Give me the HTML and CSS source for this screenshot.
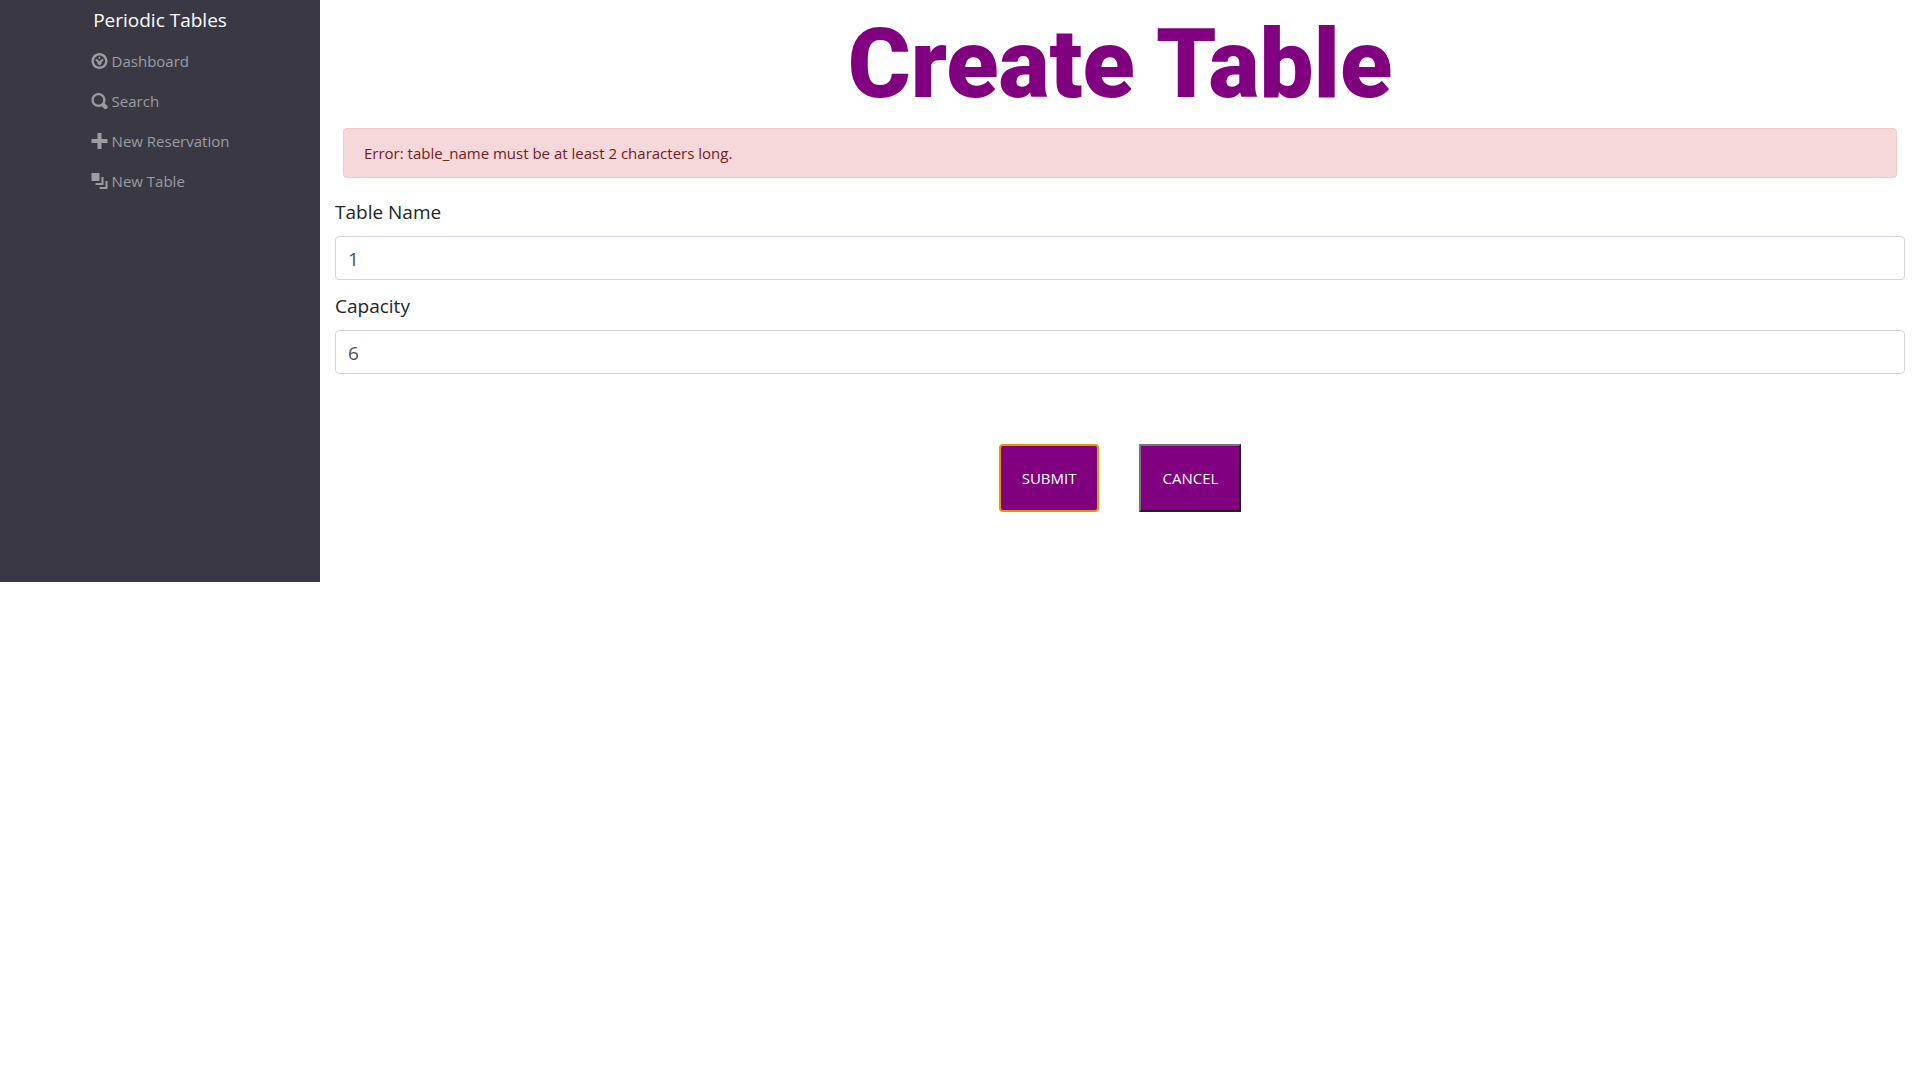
FILE: index.html
```html
<!DOCTYPE html>
<html lang="en">
<head>
<meta charset="utf-8">
<meta name="viewport" content="width=device-width, initial-scale=1">
<title>Periodic Tables</title>
<link rel="stylesheet" href="styles.css">
</head>
<body>
<div class="layout">
  <nav class="sidebar">
    <a class="brand" href="#">Periodic Tables</a>
    <ul class="menu">
      <li><a class="menu-link" href="#"><svg class="icon" viewBox="0 0 8 8" aria-hidden="true"><path fill-rule="evenodd" d="M4 0c-2.2 0-4 1.8-4 4s1.8 4 4 4 4-1.8 4-4-1.8-4-4-4zm0 1.2c1.55 0 2.8 1.25 2.8 2.8s-1.25 2.8-2.8 2.8-2.8-1.25-2.8-2.8 1.25-2.8 2.8-2.8z"/><path d="M4 1.9c-.28 0-.5.22-.5.5s.22.5.5.5.5-.22.5-.5-.22-.5-.5-.5zm-1.66 1.1a.5.5 0 0 0-.19.84l.91.91c-.02.08-.06.16-.06.25 0 .55.45 1 1 1s1-.45 1-1c0-.09-.04-.17-.06-.25l.91-.91a.5.5 0 1 0-.72-.72l-.91.91c-.08-.02-.16-.03-.22-.03s-.14.01-.22.03l-.91-.91a.5.5 0 0 0-.53-.12z"/></svg>Dashboard</a></li>
      <li><a class="menu-link" href="#"><svg class="icon" viewBox="0 0 8 8" aria-hidden="true"><path fill-rule="evenodd" d="M3.5 0c-1.92 0-3.5 1.57-3.5 3.5s1.57 3.5 3.5 3.5c.59 0 1.17-.14 1.66-.41a1 1 0 0 0 .13.13l1 1a1.02 1.02 0 1 0 1.44-1.44l-1-1a1 1 0 0 0-.16-.13c.27-.49.44-1.06.44-1.66 0-1.93-1.55-3.5-3.5-3.5zm0 1.15c1.3 0 2.35 1.05 2.35 2.35s-1.05 2.35-2.35 2.35-2.35-1.05-2.35-2.35 1.05-2.35 2.35-2.35z"/></svg>Search</a></li>
      <li><a class="menu-link" href="#"><svg class="icon" viewBox="0 0 8 8" aria-hidden="true"><path d="M3 0v3h-3v2h3v3h2v-3h3v-2h-3v-3h-2z"/></svg>New Reservation</a></li>
      <li><a class="menu-link" href="#"><svg class="icon" viewBox="0 0 8 8" aria-hidden="true"><path d="M0 0v4h4v-4h-4zm5 2v3h-3v1h4v-4h-1zm2 2v3h-3v1h4v-4h-1z"/></svg>New Table</a></li>
    </ul>
  </nav>
  <main class="content">
    <h1 class="title">Create Table</h1>
    <div class="alert" role="alert">Error: table_name must be at least 2 characters long.</div>
    <form class="form">
      <label class="label" for="table_name">Table Name</label>
      <input class="field" id="table_name" name="table_name" type="text" value="1">
      <label class="label" for="capacity">Capacity</label>
      <input class="field" id="capacity" name="capacity" type="text" inputmode="numeric" value="6">
      <div class="actions">
        <button class="button button-active" type="submit">SUBMIT</button>
        <button class="button" type="button">CANCEL</button>
      </div>
    </form>
  </main>
</div>
</body>
</html>
```
FILE: styles.css
```css
* {
  box-sizing: border-box;
}

body {
  margin: 0;
  background: #fff;
  color: #212529;
  font-family: "Segoe UI", "Open Sans", "Noto Sans", sans-serif;
  font-size: 15px;
  line-height: 24px;
}

.layout {
  display: grid;
  grid-template-columns: 1fr 5fr;
}

.sidebar {
  display: flex;
  flex-direction: column;
  align-items: center;
  background: #3a3943;
}

.brand {
  padding: 6px 0;
  color: #fff;
  font-size: 19px;
  line-height: 29px;
  text-decoration: none;
}

.menu {
  margin: 0;
  padding: 0;
  list-style: none;
}

.menu-link {
  display: flex;
  align-items: center;
  gap: 4px;
  padding: 8px 0;
  color: #9c9ca1;
  text-decoration: none;
}

.icon {
  width: 17px;
  height: 16px;
  fill: currentColor;
}

.content {
  padding: 0 15px 70px;
}

.title {
  margin: 0;
  padding: 6px 0 2px;
  color: #800080;
  font-family: "Franklin Gothic Medium", Roboto, "Liberation Sans", sans-serif;
  font-size: 96px;
  font-weight: 900;
  line-height: 116px;
  text-align: center;
}

.alert {
  margin: 4px 8px 19px;
  padding: 12px 20px;
  border: 1px solid #f5c6cb;
  border-radius: 4px;
  background: #f6d7da;
  color: #721c24;
}

.form {
  display: flex;
  flex-direction: column;
}

.label {
  margin-bottom: 9px;
  font-size: 19px;
  line-height: 30px;
}

.field {
  width: 100%;
  height: 44px;
  margin-bottom: 11px;
  padding: 7px 12px 5px;
  border: 1px solid #ced4da;
  border-radius: 4px;
  background: #fff;
  color: #495057;
  font: inherit;
  font-size: 19px;
}

.actions {
  display: flex;
  justify-content: center;
  gap: 40px;
  padding-top: 59px;
}

.button {
  padding: 20px 21px;
  border: 2px solid;
  border-color: #767676 #212121 #212121 #767676;
  background: #800080;
  color: #fff;
  font: inherit;
}

.button-active {
  border-color: #e59700;
  border-radius: 4px;
}
```
